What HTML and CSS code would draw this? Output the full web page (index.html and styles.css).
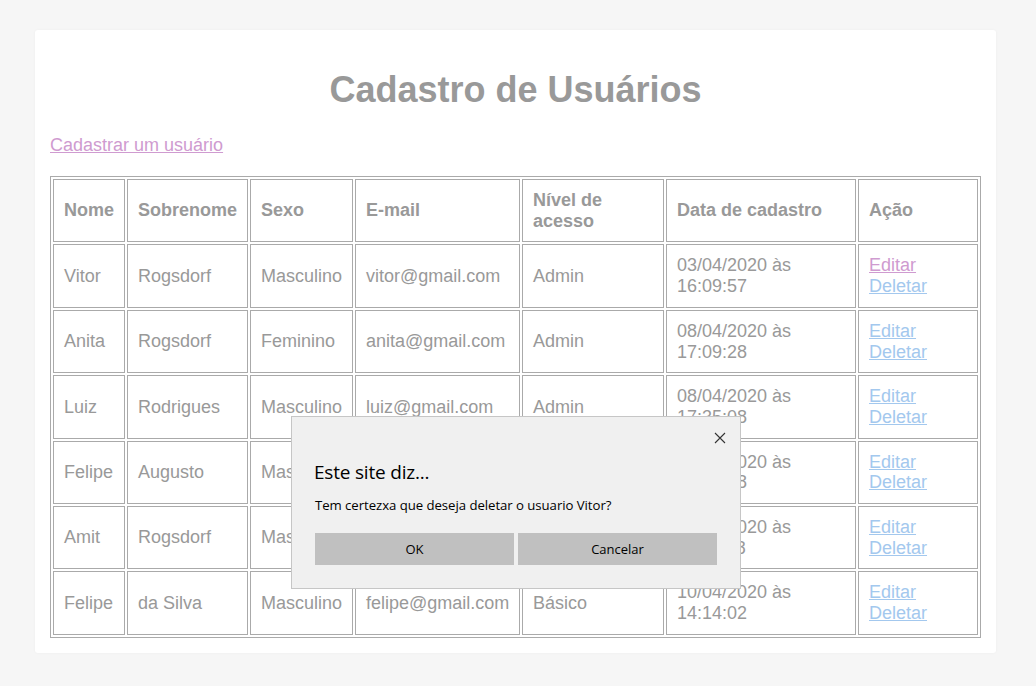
FILE: index.html
```html
<!DOCTYPE html>
<html lang="pt-BR">
<head>
<meta charset="utf-8">
<title>Cadastro de Usuários</title>
<link rel="stylesheet" href="styles.css">
</head>
<body>
<div class="container">
  <h1 class="title">Cadastro de Usuários</h1>
  <div class="actions"><a class="link visited" href="#">Cadastrar um usuário</a></div>
  <table class="users">
    <thead>
      <tr>
        <th class="c-nome">Nome</th><th class="c-sobrenome">Sobrenome</th><th class="c-sexo">Sexo</th><th class="c-email">E-mail</th><th class="c-nivel">Nível de acesso</th><th class="c-data">Data de cadastro</th><th class="c-acao">Ação</th>
      </tr>
    </thead>
    <tbody>
      <tr><td>Vitor</td><td>Rogsdorf</td><td>Masculino</td><td>vitor@gmail.com</td><td>Admin</td><td>03/04/2020 às<br>16:09:57</td><td><a class="link visited" href="#">Editar</a><br><a class="link" href="#">Deletar</a></td></tr>
      <tr><td>Anita</td><td>Rogsdorf</td><td>Feminino</td><td>anita@gmail.com</td><td>Admin</td><td>08/04/2020 às<br>17:09:28</td><td><a class="link" href="#">Editar</a><br><a class="link" href="#">Deletar</a></td></tr>
      <tr><td>Luiz</td><td>Rodrigues</td><td>Masculino</td><td>luiz@gmail.com</td><td>Admin</td><td>08/04/2020 às<br>17:35:08</td><td><a class="link" href="#">Editar</a><br><a class="link" href="#">Deletar</a></td></tr>
      <tr><td>Felipe</td><td>Augusto</td><td>Masculino</td><td>felipe@gmail.com</td><td>Básico</td><td>09/04/2020 às<br>10:12:18</td><td><a class="link" href="#">Editar</a><br><a class="link" href="#">Deletar</a></td></tr>
      <tr><td>Amit</td><td>Rogsdorf</td><td>Masculino</td><td>amit@gmail.com</td><td>Básico</td><td>09/04/2020 às<br>11:20:48</td><td><a class="link" href="#">Editar</a><br><a class="link" href="#">Deletar</a></td></tr>
      <tr><td>Felipe</td><td>da Silva</td><td>Masculino</td><td>felipe@gmail.com</td><td>Básico</td><td>10/04/2020 às<br>14:14:02</td><td><a class="link" href="#">Editar</a><br><a class="link" href="#">Deletar</a></td></tr>
    </tbody>
  </table>
</div>

<div class="dialog" role="dialog">
  <div class="dialog-top">
    <svg class="close" width="12" height="12" viewBox="0 0 12 12"><path d="M1 1L11 11M11 1L1 11" stroke="#333" stroke-width="1.1" fill="none"/></svg>
  </div>
  <div class="dialog-title">Este site diz...</div>
  <div class="dialog-msg">Tem certezxa que deseja deletar o usuario Vitor?</div>
  <div class="dialog-buttons">
    <button class="btn">OK</button>
    <button class="btn">Cancelar</button>
  </div>
</div>
</body>
</html>
```

FILE: styles.css
```css
html, body {
  margin: 0;
  padding: 0;
  background: #f6f6f6;
}
body {
  padding: 30px 0 34px 35px;
  font-family: "Liberation Sans", Arial, sans-serif;
  font-size: 18px;
  color: #999;
}
.container {
  width: 931px;
  padding: 15px;
  background: #fff;
  border-radius: 3px;
  box-shadow: 0 0 3px rgba(0,0,0,0.04);
}
.title {
  margin: 24px 0 25px;
  font-size: 36px;
  line-height: 41px;
  text-align: center;
  color: #999;
}
.actions {
  margin-bottom: 20px;
}
.link {
  color: #a3c8ee;
  text-decoration: underline;
}
.link.visited {
  color: #cf9bd0;
}
.users {
  width: 100%;
  table-layout: fixed;
  border: 1px solid #aaa;
  border-spacing: 2px;
  border-collapse: separate;
}
.users th, .users td {
  box-sizing: border-box;
  border: 1px solid #aaa;
  padding: 10px;
  text-align: left;
  vertical-align: middle;
  line-height: 20.7px;
}
.users th {
  font-weight: bold;
  color: #999;
}
.c-nome { width: 72px; }
.c-sobrenome { width: 121px; }
.c-sexo { width: 103px; }
.c-email { width: 165px; }
.c-nivel { width: 142px; }
.c-data { width: 190px; }
.c-acao { width: 120px; }

.dialog {
  position: absolute;
  left: 291px;
  top: 416px;
  width: 448px;
  height: 171px;
  background: #f0f0f0;
  border: 1px solid #c6c6c6;
  font-family: "Open Sans", "Noto Sans", sans-serif;
  color: #000;
  box-sizing: content-box;
}
.dialog-top {
  height: 40px;
  display: flex;
  justify-content: flex-end;
  align-items: flex-start;
}
.close {
  margin: 15px 14px 0 0;
}
.dialog-title {
  margin: 2px 0 0 22px;
  font-size: 19px;
  line-height: 26px;
  letter-spacing: -0.2px;
}
.dialog-msg {
  margin: 11px 0 0 23px;
  font-size: 13.2px;
  line-height: 18px;
  letter-spacing: -0.05px;
}
.dialog-buttons {
  display: flex;
  gap: 4px;
  margin: 19px 23px 0 23px;
}
.btn {
  flex: 1;
  height: 32px;
  border: none;
  background: #c0c0c0;
  font-family: "Open Sans", "Noto Sans", sans-serif;
  font-size: 13px;
  color: #000;
  padding: 0;
}
```
